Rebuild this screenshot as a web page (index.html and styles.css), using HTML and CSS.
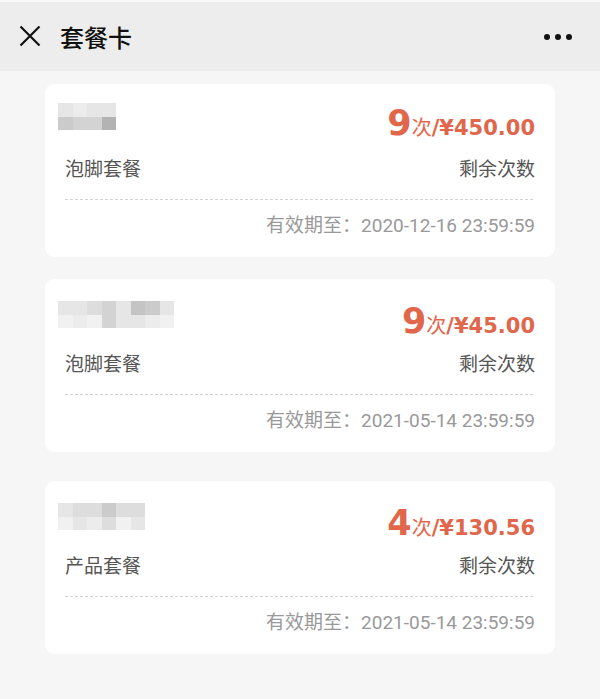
FILE: index.html
```html
<!DOCTYPE html>
<html lang="zh-CN">
<head>
<meta charset="utf-8">
<title>套餐卡</title>
<link rel="stylesheet" href="styles.css">
</head>
<body>
<header class="topbar">
  <svg class="close" width="22" height="22" viewBox="0 0 22 22" aria-hidden="true">
    <path d="M1.5 1.5 L20.5 20.5 M20.5 1.5 L1.5 20.5" stroke="#111" stroke-width="2.2" fill="none"/>
  </svg>
  <h1 class="title">套餐卡</h1>
  <div class="more" aria-label="更多"><i></i><i></i><i></i></div>
</header>

<main class="list">
  <section class="card">
    <div class="row top">
      <div class="mosaic cols4">
        <i class="g3"></i><i class="g2"></i><i class="g3"></i><i class="g3"></i>
        <i class="g6"></i><i class="g5"></i><i class="g5"></i><i class="g8"></i>
      </div>
      <div class="price"><span class="num">9</span><span class="unit">次</span><span class="amt">/¥450.00</span></div>
    </div>
    <div class="row mid">
      <span class="name">泡脚套餐</span>
      <span class="label">剩余次数</span>
    </div>
    <div class="dash"></div>
    <div class="expire">有效期至：2020-12-16 23:59:59</div>
  </section>

  <section class="card second">
    <div class="row top">
      <div class="mosaic cols8">
        <i class="g3"></i><i class="g3"></i><i class="g4"></i><i class="g5"></i><i class="g3"></i><i class="g7"></i><i class="g6"></i><i class="g3"></i>
        <i class="g1"></i><i class="g2"></i><i class="g1"></i><i class="g5"></i><i class="g3"></i><i class="g3"></i><i class="g2"></i><i class="g1"></i>
      </div>
      <div class="price"><span class="num">9</span><span class="unit">次</span><span class="amt">/¥45.00</span></div>
    </div>
    <div class="row mid">
      <span class="name">泡脚套餐</span>
      <span class="label">剩余次数</span>
    </div>
    <div class="dash"></div>
    <div class="expire">有效期至：2021-05-14 23:59:59</div>
  </section>

  <section class="card third">
    <div class="row top">
      <div class="mosaic cols6">
        <i class="g3"></i><i class="g4"></i><i class="g4"></i><i class="g6"></i><i class="g4"></i><i class="g4"></i>
        <i class="g1"></i><i class="g3"></i><i class="g2"></i><i class="g4"></i><i class="g1"></i><i class="g3"></i>
      </div>
      <div class="price"><span class="num">4</span><span class="unit">次</span><span class="amt">/¥130.56</span></div>
    </div>
    <div class="row mid">
      <span class="name">产品套餐</span>
      <span class="label">剩余次数</span>
    </div>
    <div class="dash"></div>
    <div class="expire">有效期至：2021-05-14 23:59:59</div>
  </section>
</main>
</body>
</html>
```

FILE: styles.css
```css
* { box-sizing: border-box; }

html, body {
  margin: 0;
  padding: 0;
}

body {
  width: 600px;
  height: 699px;
  overflow: hidden;
  background: #f6f6f6;
  font-family: Roboto, "Noto Sans CJK SC", sans-serif;
  color: #555;
}

.topbar {
  height: 71px;
  background: #ededed;
  border-top: 2px solid #f9f9f9;
  display: flex;
  align-items: center;
  padding: 0 28px 0 19px;
}

.close {
  display: block;
  flex: none;
  margin-top: -1px;
}

.title {
  margin: 0 0 0 19px;
  font-family: "Noto Sans CJK SC", sans-serif;
  font-size: 24px;
  font-weight: 500;
  color: #111;
  line-height: 1;
  flex: 1;
}

.more {
  display: flex;
  gap: 5px;
}

.more i {
  display: block;
  width: 6px;
  height: 6px;
  border-radius: 50%;
  background: #111;
}

.list {
  display: flex;
  flex-direction: column;
  gap: 22px;
  padding: 13px 45px 0;
}

.card {
  height: 173px;
  background: #fff;
  border-radius: 9px;
  padding: 19px 20px 0;
}

.card.second {
  padding-top: 22px;
}

.card.third {
  margin-top: 7px;
  padding-top: 22px;
}

.row {
  display: flex;
  justify-content: space-between;
}

.row.top {
  height: 54px;
  align-items: flex-start;
}

.card.second .row.top,
.card.third .row.top {
  height: 51px;
}

.mosaic {
  display: grid;
  grid-auto-rows: 13.5px;
  margin-left: -7px;
}

.mosaic.cols4 { grid-template-columns: repeat(4, 14.5px); }
.mosaic.cols6 { grid-template-columns: repeat(6, 14.5px); }
.mosaic.cols8 { grid-template-columns: repeat(8, 14.5px); }

.mosaic i { display: block; }
.g1 { background: #f1f1f1; }
.g2 { background: #ececec; }
.g3 { background: #e6e6e6; }
.g4 { background: #dddddd; }
.g5 { background: #d3d3d3; }
.g6 { background: #cbcbcb; }
.g7 { background: #c4c4c4; }
.g8 { background: #b3b3b3; }

.price {
  color: #e0674c;
  font-family: "DejaVu Sans", "Noto Sans CJK SC", sans-serif;
  font-weight: 700;
  line-height: 36px;
  white-space: nowrap;
  margin-top: 2px;
}

.price .num {
  font-size: 35px;
}

.price .unit {
  font-family: "Noto Sans CJK SC", sans-serif;
  font-weight: 400;
  font-size: 20px;
  margin-left: 0;
}

.price .amt {
  font-size: 21px;
}

.row.mid {
  font-size: 19px;
  line-height: 26px;
  color: #555;
}

.dash {
  height: 1px;
  margin-top: 16px;
  background: repeating-linear-gradient(to right, #d2d2d2 0 3px, transparent 3px 5px);
}

.expire {
  margin-top: 13px;
  font-size: 19px;
  line-height: 26px;
  color: #999;
  text-align: right;
}
```
